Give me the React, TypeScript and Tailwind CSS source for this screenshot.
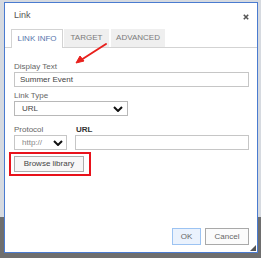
import React from 'react'

// Small down chevron used by the fake selects
function Chevron() {
    return (
        <svg width="10" height="6" viewBox="0 0 10 6" className="shrink-0">
            <path d="M1 1 L5 5 L9 1" fill="none" stroke="#111" strokeWidth="2" />
        </svg>
    )
}

export default function App() {
    return (
        <div
            className="relative w-[261px] h-[258px] overflow-hidden pt-[2px] pl-[4px] bg-[linear-gradient(to_bottom,#d6dae0_217px,#6e6e6e_217px)]"
            style={{ fontFamily: '"Liberation Sans", Arial, sans-serif' }}
        >
            <div className="relative w-[254px] h-[251px] border border-[#4a7bd0] bg-white flex flex-col">
                {/* title bar */}
                <div className="h-[26px] flex items-center justify-between pl-[9px] pr-[8px]">
                    <span className="text-[9px] text-[#555]">Link</span>
                    <svg width="6" height="6" viewBox="0 0 6 6" className="mt-[1px]">
                        <path d="M0.8 0.8 L5.2 5.2 M5.2 0.8 L0.8 5.2" stroke="#555" strokeWidth="1.6" />
                    </svg>
                </div>

                {/* tabs */}
                <div className="h-[19px] flex items-end pl-[6px] gap-[1px] border-b border-[#d3d3d3]">
                    <div className="h-[19px] w-[52px] -mb-px bg-white border border-b-0 border-[#d3d3d3] flex items-center justify-center text-[8px] text-[#5775ad]">
                        LINK INFO
                    </div>
                    <div className="h-[18px] w-[45px] bg-[#efefef] flex items-center justify-center text-[8px] text-[#7a7a7a]">
                        TARGET
                    </div>
                    <div className="h-[18px] w-[54px] ml-[1px] bg-[#efefef] flex items-center justify-center text-[8px] text-[#7a7a7a]">
                        ADVANCED
                    </div>
                </div>

                {/* content */}
                <div className="flex-1 flex flex-col pl-[9px] pr-[8px] pt-[14px] text-[8px]">
                    <div className="h-[10px] leading-[10px] text-[#666]">Display Text</div>
                    <div className="h-[15px] border border-[#c6c6c6] flex items-center pl-[5px] text-[#444]">
                        Summer Event
                    </div>

                    <div className="h-[10px] leading-[10px] mt-[4px] text-[#666]">Link Type</div>
                    <div className="h-[15px] w-[114px] border border-[#b8b8b8] flex items-center justify-between pl-[7px] pr-[4px] text-[#444]">
                        <span>URL</span>
                        <Chevron />
                    </div>

                    <div className="flex gap-[8px] mt-[9px]">
                        <div className="w-[53px] flex flex-col">
                            <div className="h-[10px] leading-[10px] text-[#666]">Protocol</div>
                            <div className="h-[15px] border border-[#c6c6c6] flex items-center justify-between pl-[7px] pr-[3px] text-[#888]">
                                <span>http://</span>
                                <Chevron />
                            </div>
                        </div>
                        <div className="flex-1 flex flex-col">
                            <div className="h-[10px] leading-[10px] pl-[1px] font-bold text-[#333]">URL</div>
                            <div className="h-[15px] border border-[#c6c6c6]" />
                        </div>
                    </div>

                    <div className="mt-[2px] -ml-[5px] w-[82px] h-[24px] border-2 border-[#e8121b] pl-[3px] pt-[2px]">
                        <div className="w-[70px] h-[16px] border border-[#adadad] bg-[#f7f7f7] flex items-center justify-center text-[#444]">
                            Browse library
                        </div>
                    </div>
                </div>

                {/* footer */}
                <div className="flex justify-end gap-[4px] pr-[8px] pb-[7px] text-[8px]">
                    <div className="w-[29px] h-[17px] border border-[#9cc3f2] bg-[#eaf2fd] flex items-center justify-center text-[#666]">
                        OK
                    </div>
                    <div className="w-[44px] h-[17px] border border-[#a9a9a9] bg-[#fbfbfb] flex items-center justify-center text-[#666]">
                        Cancel
                    </div>
                </div>

                {/* resize grip */}
                <svg width="6" height="6" viewBox="0 0 6 6" className="absolute right-[1px] bottom-[1px]">
                    <path d="M6 0 L6 6 L0 6 Z" fill="#555" />
                </svg>
            </div>

            {/* red annotation arrow */}
            <svg width="261" height="258" className="absolute left-0 top-0 pointer-events-none">
                <path d="M106 44 L81 60" stroke="#e8201c" strokeWidth="2" strokeLinecap="round" />
                <path d="M76 63 L80 56 L84 61 Z" fill="#e8201c" stroke="#e8201c" strokeWidth="1" strokeLinejoin="round" />
            </svg>
        </div>
    )
}
